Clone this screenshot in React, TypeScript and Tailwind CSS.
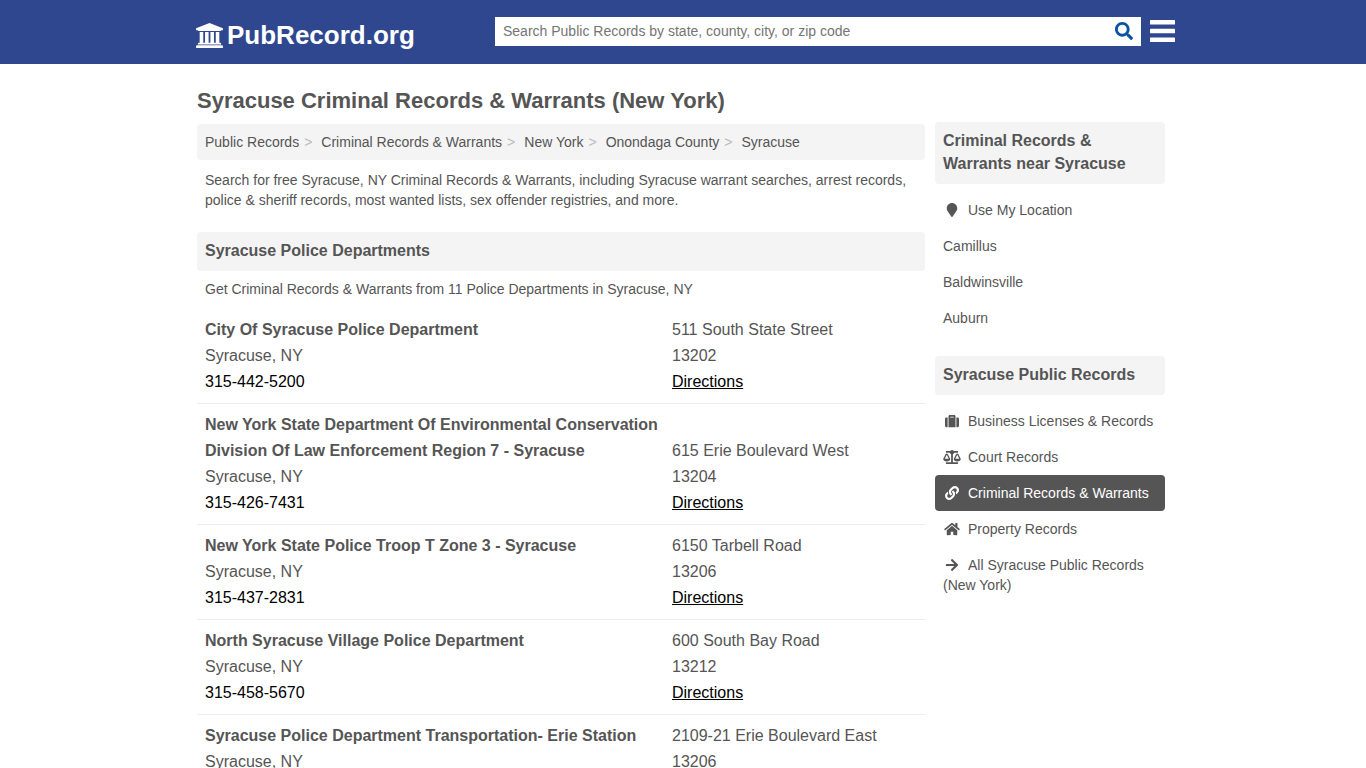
import type { ReactNode } from "react";
import type { IconType } from "react-icons";
import { FaArrowRight, FaBalanceScale, FaHome, FaLink, FaMapMarker, FaSearch, FaSuitcase } from "react-icons/fa";

const breadcrumbs = ["Public Records", "Criminal Records & Warrants", "New York", "Onondaga County", "Syracuse"];

const departments = [
  {
    name: "City Of Syracuse Police Department",
    city: "Syracuse, NY",
    phone: "315-442-5200",
    street: "511 South State Street",
    zip: "13202",
  },
  {
    name: "New York State Department Of Environmental Conservation Division Of Law Enforcement Region 7 - Syracuse",
    city: "Syracuse, NY",
    phone: "315-426-7431",
    street: "615 Erie Boulevard West",
    zip: "13204",
  },
  {
    name: "New York State Police Troop T Zone 3 - Syracuse",
    city: "Syracuse, NY",
    phone: "315-437-2831",
    street: "6150 Tarbell Road",
    zip: "13206",
  },
  {
    name: "North Syracuse Village Police Department",
    city: "Syracuse, NY",
    phone: "315-458-5670",
    street: "600 South Bay Road",
    zip: "13212",
  },
  {
    name: "Syracuse Police Department Transportation- Erie Station",
    city: "Syracuse, NY",
    phone: "",
    street: "2109-21 Erie Boulevard East",
    zip: "13206",
  },
];

type SideLink = { label: string; icon?: IconType; active?: boolean };

const nearby: SideLink[] = [
  { label: "Use My Location", icon: FaMapMarker },
  { label: "Camillus" },
  { label: "Baldwinsville" },
  { label: "Auburn" },
];

const records: SideLink[] = [
  { label: "Business Licenses & Records", icon: FaSuitcase },
  { label: "Court Records", icon: FaBalanceScale },
  { label: "Criminal Records & Warrants", icon: FaLink, active: true },
  { label: "Property Records", icon: FaHome },
  { label: "All Syracuse Public Records (New York)", icon: FaArrowRight },
];

function LogoIcon() {
  return (
    <svg viewBox="0 0 1920 1792" fill="currentColor" className="h-[25px] w-[27px]" aria-hidden="true">
      <path d="M960 0l960 384v128h-128q0 26-20.500 45t-48.500 19h-1526q-28 0-48.500-19t-20.500-45h-128v-128z" />
      <path d="M256 640h256v768h128v-768h256v768h128v-768h256v768h128v-768h256v768h59q28 0 48.500 19t20.500 45v64h-1664v-64q0-26 20.500-45t48.500-19h59z" />
      <path d="M1851 1600q28 0 48.500 19t20.500 45v128h-1920v-128q0-26 20.500-45t48.500-19z" />
    </svg>
  );
}

function MenuIcon() {
  return (
    <svg viewBox="0 0 25 22" fill="currentColor" className="h-[22px] w-[25px]" aria-hidden="true">
      <rect width="25" height="4.600" rx="0.600" />
      <rect y="8.700" width="25" height="4.600" rx="0.600" />
      <rect y="17.400" width="25" height="4.600" rx="0.600" />
    </svg>
  );
}

function SectionTitle({ children }: { children: ReactNode }) {
  return (
    <h2 className="rounded bg-[#f4f4f4] px-2 pt-[7px] pb-[9px] text-base leading-[23px] font-bold">{children}</h2>
  );
}

function SideSection({ title, links }: { title: string; links: SideLink[] }) {
  return (
    <section>
      <SectionTitle>{title}</SectionTitle>
      <ul className="mt-2">
        {links.map(({ label, icon: Icon, active }) => (
          <li key={label}>
            <a
              href="#"
              className={`block rounded p-2 text-sm leading-5 ${active ? "bg-[#555] text-white" : "hover:bg-[#f4f4f4]"}`}
            >
              {Icon && <Icon className="mr-[7px] inline h-[14px] w-[18px] align-[-2px]" />}
              {label}
            </a>
          </li>
        ))}
      </ul>
    </section>
  );
}

export default function App() {
  return (
    <div className="min-h-screen bg-white font-['Liberation_Sans',Arial,sans-serif] text-[#555]">
      {/* Header */}
      <header className="bg-[#2e478f]">
        <div className="mx-auto flex h-16 max-w-[984px] items-center pb-[2px] pl-1">
          <a href="#" className="flex w-[300px] items-center gap-1 pl-px pt-2 text-[26px] leading-8 font-bold text-white">
            <LogoIcon />
            PubRecord.org
          </a>
          <form className="flex h-[29px] flex-1 items-center bg-white" onSubmit={(e) => e.preventDefault()}>
            <input
              type="text"
              aria-label="Search Public Records"
              placeholder="Search Public Records by state, county, city, or zip code"
              className="h-full min-w-0 flex-1 px-2 text-sm text-[#555] outline-none placeholder:text-[#757575]"
            />
            <button type="submit" aria-label="Search" className="px-2 text-[#0b52a0]">
              <FaSearch className="size-[18px]" />
            </button>
          </form>
          <button type="button" aria-label="Menu" className="ml-[9px] text-white">
            <MenuIcon />
          </button>
        </div>
      </header>

      <div className="mx-auto max-w-[980px] pt-[23px] pr-2 pl-1">
        <h1 className="text-[22px] leading-7 font-bold">Syracuse Criminal Records &amp; Warrants (New York)</h1>

        <div className="mt-[7px] flex gap-[10px]">
          <main className="min-w-0 flex-1 pt-[2px]">
            <nav aria-label="Breadcrumb" className="rounded bg-[#f4f4f4] p-2">
              <ol className="flex text-sm leading-5">
                {breadcrumbs.map((crumb, i) => (
                  <li key={crumb}>
                    <a href="#">{crumb}</a>
                    {i < breadcrumbs.length - 1 && <span className="mr-[9px] ml-[5px] text-[#bbb]">&gt;</span>}
                  </li>
                ))}
              </ol>
            </nav>

            <p className="px-2 pt-[10px] pb-[22px] text-sm leading-5">
              Search for free Syracuse, NY Criminal Records &amp; Warrants, including Syracuse warrant searches, arrest
              records, police &amp; sheriff records, most wanted lists, sex offender registries, and more.
            </p>

            <SectionTitle>Syracuse Police Departments</SectionTitle>
            <p className="px-2 pt-2 pb-[10px] text-sm leading-5">
              Get Criminal Records &amp; Warrants from 11 Police Departments in Syracuse, NY
            </p>

            {/* Departments */}
            <ul>
              {departments.map((dept) => (
                <li
                  key={dept.name}
                  className="grid grid-cols-[467fr_245fr] items-end border-b border-[#eee] p-2 text-base leading-[26px]"
                >
                  <div>
                    <h3 className="font-bold">{dept.name}</h3>
                    <p>{dept.city}</p>
                    {dept.phone && (
                      <a href={`tel:${dept.phone}`} className="block text-black">
                        {dept.phone}
                      </a>
                    )}
                  </div>
                  <div>
                    <p>{dept.street}</p>
                    <p>{dept.zip}</p>
                    {dept.phone && (
                      <a href="#" className="text-black underline">
                        Directions
                      </a>
                    )}
                  </div>
                </li>
              ))}
            </ul>
          </main>

          <aside className="flex w-[230px] shrink-0 flex-col gap-5">
            <SideSection title="Criminal Records & Warrants near Syracuse" links={nearby} />
            <SideSection title="Syracuse Public Records" links={records} />
          </aside>
        </div>
      </div>
    </div>
  );
}
